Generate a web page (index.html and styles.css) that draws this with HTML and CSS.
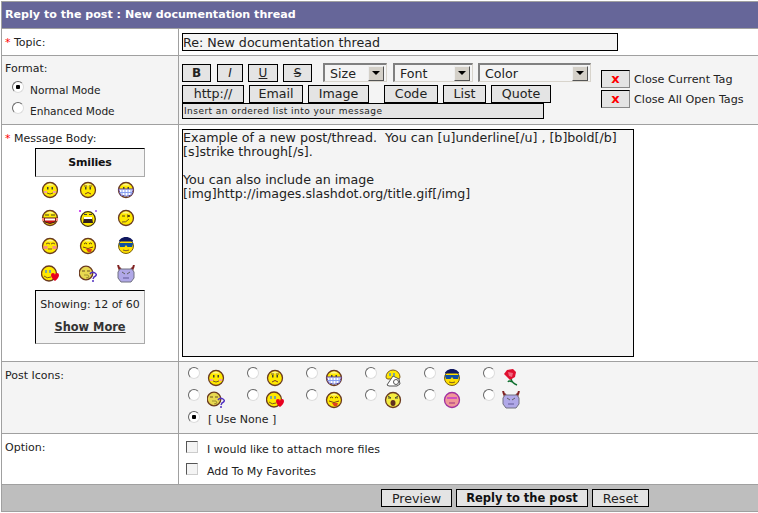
FILE: index.html
```html
<!DOCTYPE html>
<html lang="en">
<head>
    <meta charset="UTF-8">
    <meta name="viewport" content="width=device-width, initial-scale=1.0">
    <title>Reply to the post</title>
    <link rel="stylesheet" href="styles.css">
</head>
<body>
    <svg class="defs" width="0" height="0">
        <defs>
            <g id="face">
                <circle cx="8" cy="8" r="7.5" fill="#ffe900" stroke="#6a3a20" stroke-width="1.3"/>
                <path d="M4 3.500a5 5 0 0 1 8 0z" fill="#fff68a"/>
            </g>
            <g id="eyes"><rect x="5" y="5" width="1.500" height="2.500" fill="#443"/><rect x="9.500" y="5" width="1.500" height="2.500" fill="#443"/></g>
            <symbol id="s-smile" viewBox="-1 -1 18 18">
                <use href="#face"/><use href="#eyes"/>
                <rect x="2" y="9" width="3" height="2" fill="#f5a0a0"/><rect x="11" y="9" width="3" height="2" fill="#f5a0a0"/>
                <path d="M5 11q3 2 6 0" fill="none" stroke="#7a5a20"/>
            </symbol>
            <symbol id="s-sad" viewBox="-1 -1 18 18">
                <use href="#face"/><use href="#eyes"/>
                <path d="M4 4h3M9 4h3" stroke="#7a5a20" fill="none"/>
                <path d="M5 12q3-3 6 0" fill="none" stroke="#7a3a20"/>
            </symbol>
            <symbol id="s-grin" viewBox="-1 -1 18 18">
                <use href="#face"/><use href="#eyes"/>
                <path d="M0.500 7h15l-2 6q-5 2.500-11 0z" fill="#fff" stroke="#5a3a90"/>
                <path d="M4 7v7M7 7v8M10 7v8M13 7v6M1.500 10.500h13" stroke="#88a0f0" fill="none"/>
            </symbol>
            <symbol id="s-laugh" viewBox="-1 -1 18 18">
                <use href="#face"/>
                <path d="M3 5h4M9 5h4" stroke="#443"/>
                <path d="M1 8h14l-2 4q-5 3-10 0z" fill="#d01010" stroke="#402020"/>
                <rect x="3" y="8.500" width="10" height="2" fill="#fff"/>
                <rect x="0" y="8" width="2" height="3" fill="#f59080"/><rect x="14" y="8" width="2" height="3" fill="#f59080"/>
            </symbol>
            <symbol id="s-shock" viewBox="0 -1 18 18">
                <rect x="0" y="0" width="2" height="2" fill="#d050f0"/><rect x="16" y="0" width="2" height="2" fill="#b080f0"/>
                <circle cx="9" cy="9" r="7.300" fill="#ffe900" stroke="#403010" stroke-width="1.300"/>
                <path d="M5 4.500h3M10 4.500h3" stroke="#443"/>
                <path d="M5 7h8l1 6H4z" fill="#302020"/><rect x="5" y="7" width="8" height="2" fill="#fff"/>
            </symbol>
            <symbol id="s-wink" viewBox="-1 -1 18 18">
                <use href="#face"/>
                <path d="M4 6h3M9 5l3 1-3 1" stroke="#5a4010" fill="none"/>
                <path d="M4 12q4 1 7-3" fill="none" stroke="#7a5a20"/>
            </symbol>
            <symbol id="s-blush" viewBox="-1 -1 18 18">
                <use href="#face"/>
                <path d="M4 6l2-1 2 1M9 6l2-1 2 1" stroke="#7a5a20" fill="none"/>
                <rect x="1.500" y="8" width="4" height="3" fill="#f59080"/><rect x="10.500" y="8" width="4" height="3" fill="#f59080"/>
                <path d="M6 11h4" stroke="#7a5a20"/>
            </symbol>
            <symbol id="s-tongue" viewBox="-1 -1 18 18">
                <use href="#face"/>
                <path d="M4 6q1.500-2 3 0M9 6q1.500-2 3 0" stroke="#5a4010" fill="none"/>
                <path d="M3 9q5 3 10 0" fill="none" stroke="#7a3a20"/>
                <path d="M6 11h6l-1 3H8z" fill="#e04020"/>
            </symbol>
            <symbol id="s-cool" viewBox="-1 -1 18 18">
                <circle cx="8" cy="8" r="7.500" fill="#ffe000" stroke="#7a6010"/>
                <path d="M1 2.500a8 7 0 0 1 14 0v1H1z" fill="#101860"/>
                <path d="M1 5h14v1l-1 3H9.500L8 7 6.500 9H2L1 6z" fill="#1050a0"/>
                <path d="M5 12q3 1.500 6 0" fill="none" stroke="#7a5a20"/>
            </symbol>
            <symbol id="s-kiss" viewBox="0 0 18 18">
                <circle cx="8" cy="8.500" r="7.500" fill="#ffe900" stroke="#6a3a20" stroke-width="1.300"/>
                <path d="M5 5v3M9 5v3" stroke="#5090d0" stroke-width="1.500"/>
                <path d="M3 11q3 3 7 1" fill="none" stroke="#7a5a20"/>
                <path d="M10 10a2 2 0 0 1 4 0 2 2 0 0 1 4 0q0 3-4 6-4-3-4-6z" fill="#e80020"/>
            </symbol>
            <symbol id="s-think" viewBox="0 0 18 18">
                <circle cx="7" cy="8" r="6.800" fill="#e8d850" stroke="#6a3a20" stroke-width="1.300"/>
                <path d="M3 6h3M8 6h3" stroke="#6a5020"/>
                <path d="M5 10h4l1 2-3 1" fill="none" stroke="#a09030"/>
                <path d="M11 9q2-3 5-1t-1 4l-1 2M13 16h2" fill="none" stroke="#5030c0" stroke-width="1.500"/>
            </symbol>
            <symbol id="s-devil" viewBox="0 0 18 18">
                <path d="M1 0l2 6M17 0l-2 6M1 2l3 2M17 2l-3 2" stroke="#802020" stroke-width="2"/>
                <path d="M3 4h12l2 3v6l-3 4H4l-3-4V7z" fill="#b0a8e8" stroke="#707080"/>
                <path d="M5 7l3 2M13 7l-3 2" stroke="#606060"/>
                <path d="M6 12h6v2H6z" fill="#8880c0"/>
            </symbol>
            <symbol id="s-ok" viewBox="0 0 18 18">
                <path d="M2 8a7 7 0 0 1 14 0q0 2-2 2H4Q2 10 2 8z" fill="#ffe900" stroke="#7a5a20"/>
                <path d="M6 4v3M10 4v3" stroke="#5090d0" stroke-width="1.500"/>
                <path d="M3 16l6-9 2 1 4 2 1 5-3 2H5z" fill="#fff" stroke="#555"/>
                <circle cx="12" cy="13" r="2.500" fill="none" stroke="#555"/>
            </symbol>
            <symbol id="s-rose" viewBox="0 0 18 18">
                <path d="M9 10q1 4 6 6M10 13q-3-2-4 0" fill="none" stroke="#107030" stroke-width="1.500"/>
                <path d="M2 5l3-4 6-1 3 3-1 5-5 3z" fill="#e01030"/>
                <path d="M6 3l5 1-1 4-3-1z" fill="#f06880"/>
            </symbol>
            <symbol id="s-scared" viewBox="-1 -1 18 18">
                <circle cx="8" cy="8" r="7.500" fill="#f4ec40" stroke="#6a3a20" stroke-width="1.300"/>
                <path d="M3 4l3 2M13 4l-3 2" stroke="#443"/>
                <path d="M3 6h3M10 6h3" stroke="#443"/>
                <ellipse cx="8" cy="11" rx="2.500" ry="3" fill="#603020"/>
            </symbol>
            <symbol id="s-pink" viewBox="-1 -1 18 18">
                <circle cx="8" cy="8" r="7.500" fill="#f09898" stroke="#a030a0" stroke-width="1.300"/>
                <path d="M3 6h10" stroke="#d050c0" stroke-width="2"/>
                <path d="M5 11h6" stroke="#a03080"/>
            </symbol>
        </defs>
    </svg>

    <form class="panel">
        <div class="title">Reply to the post : New documentation thread</div>

        <div class="row row-topic">
            <div class="label"><span class="req">*</span> Topic:</div>
            <div class="field">
                <input class="topic" type="text" value="Re: New documentation thread">
            </div>
        </div>

        <div class="row row-format alt">
            <div class="label">
                Format:
                <label class="mode"><input type="radio" name="mode" checked><span>Normal Mode</span></label>
                <label class="mode"><input type="radio" name="mode"><span>Enhanced Mode</span></label>
            </div>
            <div class="field format">
                <div class="toolbar">
                    <div class="tools tools-top">
                        <button type="button" class="btn b-b">B</button>
                        <button type="button" class="btn b-i">I</button>
                        <button type="button" class="btn b-u">U</button>
                        <button type="button" class="btn b-s">S</button>
                        <span class="select s-size"><span>Size</span><i></i></span>
                        <span class="select s-font"><span>Font</span><i></i></span>
                        <span class="select s-color"><span>Color</span><i></i></span>
                    </div>
                    <div class="tools tools-mid">
                        <button type="button" class="btn w-http">http://</button>
                        <button type="button" class="btn w-email">Email</button>
                        <button type="button" class="btn w-image">Image</button>
                        <button type="button" class="btn w-code">Code</button>
                        <button type="button" class="btn w-list">List</button>
                        <button type="button" class="btn w-quote">Quote</button>
                    </div>
                    <div class="hint">Insert an ordered list into your message</div>
                </div>
                <div class="closers">
                    <div class="closer"><button type="button" class="btn x">x</button> Close Current Tag</div>
                    <div class="closer"><button type="button" class="btn x">x</button> Close All Open Tags</div>
                </div>
            </div>
        </div>

        <div class="row row-body">
            <div class="label">
                <span class="req">*</span> Message Body:
                <div class="side-box smilies-head">Smilies</div>
                <div class="smilies">
                    <svg><use href="#s-smile"/></svg>
                    <svg><use href="#s-sad"/></svg>
                    <svg><use href="#s-grin"/></svg>
                    <svg><use href="#s-laugh"/></svg>
                    <svg><use href="#s-shock"/></svg>
                    <svg><use href="#s-wink"/></svg>
                    <svg><use href="#s-blush"/></svg>
                    <svg><use href="#s-tongue"/></svg>
                    <svg><use href="#s-cool"/></svg>
                    <svg><use href="#s-kiss"/></svg>
                    <svg><use href="#s-think"/></svg>
                    <svg><use href="#s-devil"/></svg>
                </div>
                <div class="side-box showing">
                    <div>Showing: 12 of 60</div>
                    <a href="#">Show More</a>
                </div>
            </div>
            <div class="field">
                <textarea class="message" wrap="off">Example of a new post/thread.  You can [u]underline[/u] , [b]bold[/b]
[s]strike through[/s].

You can also include an image
[img]http://images.slashdot.org/title.gif[/img]</textarea>
            </div>
        </div>

        <div class="row row-icons alt">
            <div class="label">Post Icons:</div>
            <div class="field">
                <div class="icons">
                    <label><input type="radio" name="icon"><svg><use href="#s-smile"/></svg></label>
                    <label><input type="radio" name="icon"><svg><use href="#s-sad"/></svg></label>
                    <label><input type="radio" name="icon"><svg><use href="#s-grin"/></svg></label>
                    <label><input type="radio" name="icon"><svg><use href="#s-ok"/></svg></label>
                    <label><input type="radio" name="icon"><svg><use href="#s-cool"/></svg></label>
                    <label><input type="radio" name="icon"><svg><use href="#s-rose"/></svg></label>
                    <label><input type="radio" name="icon"><svg><use href="#s-think"/></svg></label>
                    <label><input type="radio" name="icon"><svg><use href="#s-kiss"/></svg></label>
                    <label><input type="radio" name="icon"><svg><use href="#s-tongue"/></svg></label>
                    <label><input type="radio" name="icon"><svg><use href="#s-scared"/></svg></label>
                    <label><input type="radio" name="icon"><svg><use href="#s-pink"/></svg></label>
                    <label><input type="radio" name="icon"><svg><use href="#s-devil"/></svg></label>
                </div>
                <label class="none"><input type="radio" name="icon" checked><span>[ Use None ]</span></label>
            </div>
        </div>

        <div class="row row-option">
            <div class="label">Option:</div>
            <div class="field">
                <label class="check"><input type="checkbox"><span>I would like to attach more files</span></label>
                <label class="check"><input type="checkbox"><span>Add To My Favorites</span></label>
            </div>
        </div>

        <div class="actions">
            <button type="button" class="btn a-preview">Preview</button>
            <button type="button" class="btn a-reply">Reply to the post</button>
            <button type="button" class="btn a-reset">Reset</button>
        </div>
    </form>
</body>
</html>
```

FILE: styles.css
```css
body {
    margin: 1px 0 0 1px;
    background: #fff;
    font-family: "DejaVu Sans", Verdana, sans-serif;
    font-size: 11px;
    color: #222;
}
.defs {
    position: absolute;
}
.panel {
    width: 757px;
    height: 511px;
    box-sizing: border-box;
    border: 1px solid #a0a0a0;
    border-right: 0;
    display: flex;
    flex-direction: column;
}
.title {
    height: 26px;
    line-height: 25px;
    padding-left: 3px;
    background: #666699;
    color: #fff;
    font-size: 11.1px;
    font-weight: bold;
    border-bottom: 1px solid #a0a0a0;
}
.row {
    display: grid;
    grid-template-columns: 177px 1fr;
    border-bottom: 1px solid #a0a0a0;
}
.alt {
    background: #f4f4f4;
}
.label {
    padding: 7px 0 0 3px;
    border-right: 1px solid #a0a0a0;
}
.req {
    color: #ff0000;
}
.row-topic { height: 26px; }
.row-format { height: 68px; }
.row-body { height: 236px; }
.row-icons { height: 71px; }
.row-option { height: 50px; }

.field {
    padding: 4px 0 0 3px;
}
input[type="radio"], input[type="checkbox"] {
    appearance: none;
    flex: none;
    width: 12px;
    height: 12px;
    margin: 0;
    box-sizing: border-box;
    border: 1px solid;
    border-color: #666 #ddd #ddd #666;
    background: #fff;
}
input[type="radio"] {
    border-radius: 50%;
}
input[type="radio"]:checked {
    background: radial-gradient(circle, #000 0 2px, #fff 2.5px);
}
input[type="checkbox"] {
    background: #f4f4f4;
    border-color: #555 #ccc #ccc #555;
}
.topic {
    width: 436px;
    height: 18px;
    box-sizing: border-box;
    border: 1px solid #000;
    background: #f4f4f4;
    padding: 0;
    font: 12.65px "DejaVu Sans", Verdana, sans-serif;
    color: #222;
    display: block;
}
.row-format .label {
    padding-top: 6px;
}
.mode {
    display: flex;
    align-items: flex-start;
    gap: 6px;
    padding-left: 7px;
    height: 21px;
    font-size: 10.6px;
}
.mode:first-of-type {
    margin-top: 6px;
}
.mode span {
    margin-top: 3px;
}
.format {
    display: flex;
    padding-top: 7px;
}
.toolbar {
    width: 419px;
}
.tools {
    display: flex;
}
.btn {
    box-sizing: border-box;
    border: 1px solid #000;
    background: #e4e4e4;
    padding: 0;
    font: 12.65px "DejaVu Sans", Verdana, sans-serif;
    color: #222;
    height: 18px;
    line-height: 16px;
}
.tools-top {
    height: 22px;
    align-items: flex-start;
}
.tools-top .btn {
    margin-top: 1px;
    font-size: 12px;
}
.b-b { width: 29px; margin-right: 6px; font-weight: bold; }
.b-i { width: 26px; margin-right: 5px; font-style: italic; }
.b-u { width: 30px; margin-right: 5px; text-decoration: underline; }
.b-s { width: 29px; margin-right: 11px; text-decoration: line-through; }
.select {
    box-sizing: border-box;
    height: 19px;
    display: flex;
    align-items: center;
    justify-content: space-between;
    padding: 0 2px 0 5px;
    background: #f4f4f4;
    border: solid;
    border-color: #808080 #d8d4cc #d8d4cc #808080;
    border-width: 2px 1px 1px 2px;
    font-size: 12.65px;
}
.select i {
    width: 16px;
    height: 15px;
    box-sizing: border-box;
    background: #d4d0c8;
    border: 1px solid;
    border-color: #eee #555 #555 #eee;
    display: flex;
    align-items: center;
    justify-content: center;
}
.select i::after {
    content: "";
    border: 4px solid transparent;
    border-top-color: #000;
    border-bottom-width: 0;
}
.s-size { width: 64px; margin-right: 6px; }
.s-font { width: 80px; margin-right: 5px; }
.s-color { width: 113px; }
.tools-mid {
    height: 18px;
}
.w-http { width: 62px; margin-right: 5px; }
.w-email { width: 54px; margin-right: 5px; }
.w-image { width: 61px; margin-right: 15px; }
.w-code { width: 54px; margin-right: 5px; }
.w-list { width: 43px; margin-right: 5px; }
.w-quote { width: 60px; }
.hint {
    box-sizing: border-box;
    width: 362px;
    height: 16px;
    border: 1px solid #000;
    background: #e4e4e4;
    font-size: 9px;
    line-height: 14px;
    padding-left: 1px;
    letter-spacing: 0.45px;
}
.closers {
    padding: 6px 0 0 0;
}
.closer {
    display: flex;
    align-items: center;
    gap: 4px;
    height: 20px;
    font-size: 11.2px;
}
.x {
    width: 29px;
    height: 18px;
    color: #ff0000;
    font-weight: bold;
    font-size: 13px;
    border-color: #000 #888 #888 #000;
}
.side-box {
    width: 110px;
    box-sizing: border-box;
    margin-left: 30px;
    background: #f4f4f4;
    border: 1px solid;
    border-color: #000 #aaa #aaa #000;
    text-align: center;
}
.smilies-head {
    height: 29px;
    line-height: 28px;
    margin-top: 3px;
    font-weight: bold;
    color: #111;
    letter-spacing: -0.2px;
}
.smilies {
    display: grid;
    grid-template-columns: repeat(3, 38px);
    grid-auto-rows: 28px;
    margin: -1px 0 0 26px;
    justify-items: center;
    align-items: center;
    width: 114px;
}
.smilies svg {
    width: 18px;
    height: 18px;
}
.showing {
    height: 54px;
    margin-top: 2px;
    padding-top: 7px;
}
.showing a {
    display: block;
    margin-top: 9px;
    font-weight: bold;
    font-size: 11.4px;
    color: #333;
}
.message {
    display: block;
    width: 452px;
    height: 228px;
    box-sizing: border-box;
    border: 1px solid #000;
    background: #f4f4f4;
    padding: 1px 0;
    margin: 0;
    resize: none;
    overflow: hidden;
    font: 12.65px/14px "DejaVu Sans", Verdana, sans-serif;
    color: #222;
}
.icons {
    display: grid;
    grid-template-columns: repeat(6, 59px);
    grid-auto-rows: 22px;
    padding-left: 6px;
    margin-top: 1px;
}
.icons label {
    display: flex;
    align-items: flex-start;
    gap: 7px;
}
.icons svg {
    width: 18px;
    height: 18px;
    margin-top: 2px;
}
.none {
    display: flex;
    gap: 8px;
    padding-left: 6px;
}
.none span {
    margin-top: 2px;
}
.check {
    display: flex;
    gap: 9px;
    padding-left: 4px;
    height: 22px;
}
.check span {
    margin-top: 2px;
}
.row-option .field {
    padding-top: 7px;
}
.actions {
    flex: 1;
    background: #bebebe;
    display: flex;
    justify-content: flex-end;
    align-items: flex-start;
    gap: 4px;
    padding: 4px 109px 0 0;
}
.actions .btn {
    height: 18px;
    line-height: 17px;
}
.a-preview { width: 71px; }
.a-reply { width: 132px; font-weight: bold; font-size: 11.5px; color: #111; }
.a-reset { width: 57px; }
```
